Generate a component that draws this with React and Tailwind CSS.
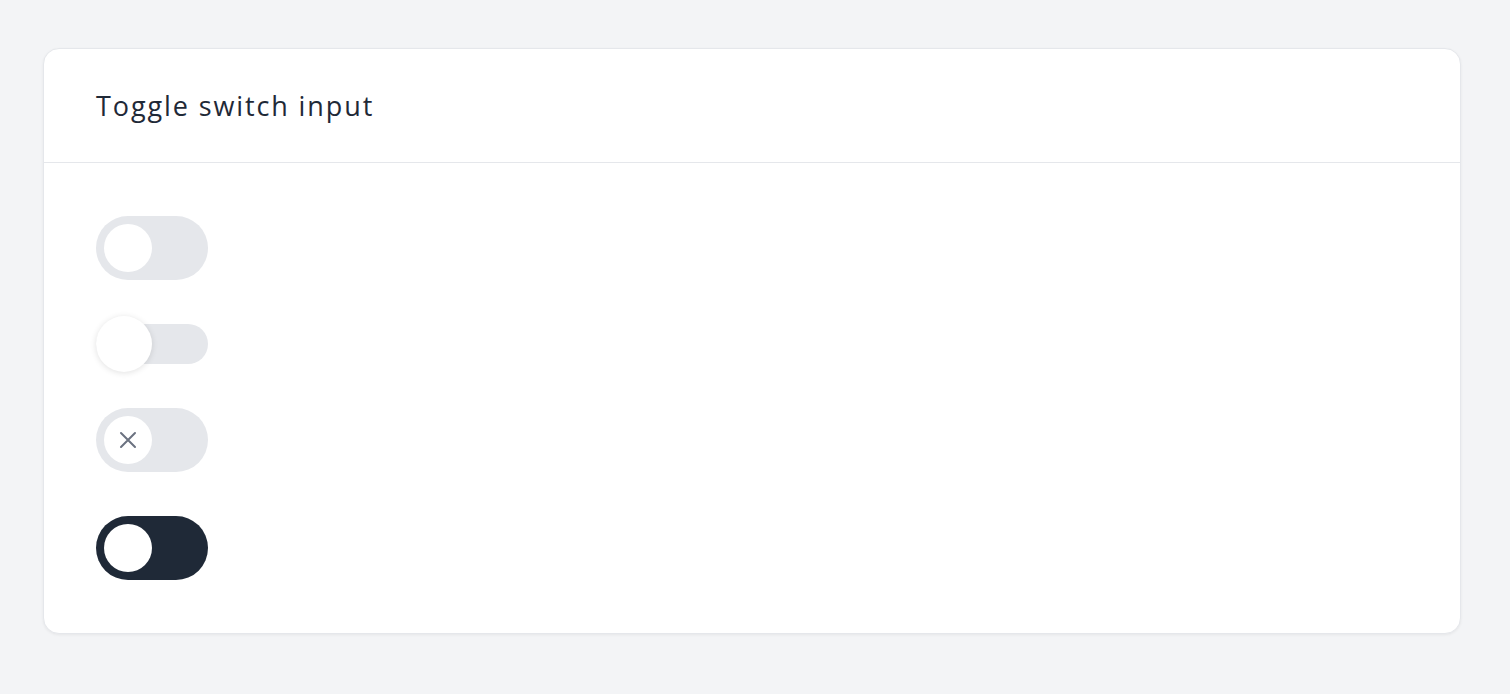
import { useState } from "react";

function Toggle({ checked, onChange, variant }) {
  if (variant === "slim") {
    return (
      <button
        onClick={onChange}
        className="relative flex h-14 w-[112px] items-center"
      >
        <span className="h-10 w-full rounded-full bg-[#e5e7eb]" />
        <span className="absolute left-0 top-0 h-14 w-14 rounded-full bg-white shadow-[0_1px_6px_rgba(0,0,0,0.12)]" />
      </button>
    );
  }

  const dark = variant === "dark";
  return (
    <button
      onClick={onChange}
      className={
        "flex h-16 w-[112px] items-center rounded-full p-2 " +
        (dark ? "bg-[#1f2937]" : "bg-[#e5e7eb]")
      }
    >
      <span className="flex h-12 w-12 items-center justify-center rounded-full bg-white">
        {variant === "icon" && (
          <svg width="18" height="18" viewBox="0 0 18 18" fill="none" stroke="#6b7280" strokeWidth="2" strokeLinecap="round">
            <path d="M2 2l14 14M16 2L2 16" />
          </svg>
        )}
      </span>
    </button>
  );
}

export default function App() {
  const [vals, setVals] = useState([false, false, false, false]);
  const flip = (i) => setVals((v) => v.map((x, j) => (j === i ? !x : x)));

  return (
    <div className="min-h-screen bg-[#f3f4f6] pl-[43px] pr-[49px] pt-[48px] font-['Lato',sans-serif]">
      <div className="rounded-2xl border border-[#e5e7eb] bg-white shadow-[0_1px_3px_rgba(0,0,0,0.06)]">
        <div className="flex h-[114px] items-center border-b border-[#e5e7eb] px-[52px]">
          <h2 className="font-['Open_Sans',sans-serif] text-[27px] font-normal leading-none tracking-[0.07em] text-[#1f2937]">
            Toggle switch input
          </h2>
        </div>
        <div className="flex flex-col items-start px-[52px] pt-[53px] pb-[53px]">
          <Toggle checked={vals[0]} onChange={() => flip(0)} />
          <div className="mt-9">
            <Toggle checked={vals[1]} onChange={() => flip(1)} variant="slim" />
          </div>
          <div className="mt-9">
            <Toggle checked={vals[2]} onChange={() => flip(2)} variant="icon" />
          </div>
          <div className="mt-11">
            <Toggle checked={vals[3]} onChange={() => flip(3)} variant="dark" />
          </div>
        </div>
      </div>
    </div>
  );
}
